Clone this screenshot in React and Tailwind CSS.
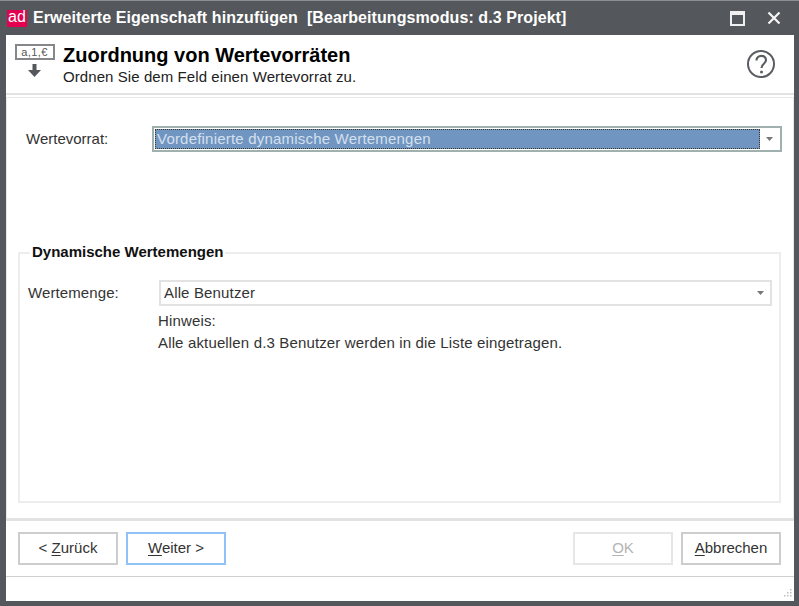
const Caret = () => (
  <svg width="7" height="4" viewBox="0 0 7 4">
    <path d="M0 0h7L3.5 4z" fill="#777" />
  </svg>
);

const Btn = ({ hot, rest, focus, disabled, before }) => (
  <button
    className={`w-[100px] h-[33px] border-2 bg-white text-[15px] ${
      focus ? "border-[#8fc2f7] text-[#333]" : disabled ? "border-[#e6e6e6] text-[#b4b4b4]" : "border-[#cdcdcd] text-[#333]"
    }`}
  >
    {before}
    <span className="underline underline-offset-2">{hot}</span>
    {rest}
  </button>
);

export default function App() {
  return (
    <div className="w-[799px] h-[606px] bg-[#54575b] border-t border-[#8d8f91] flex flex-col font-['Liberation_Sans',Arial,sans-serif] overflow-hidden">
      {/* title bar */}
      <div className="h-[34px] flex items-center pl-[7px] pr-[18px] text-white shrink-0">
        <div className="w-[20px] h-[17px] bg-[#e2004f] flex items-center justify-center text-[16px] leading-none pb-[2px] mr-[6px]">
          ad
        </div>
        <span className="text-[16px] font-bold tracking-[0.08px] whitespace-pre flex-1">
          Erweiterte Eigenschaft hinzufügen  [Bearbeitungsmodus: d.3 Projekt]
        </span>
        <div className="w-[15px] h-[15px] border-2 border-t-[4px] border-[#f0f0f0] mr-[22px]" />
        <svg width="14" height="14" viewBox="0 0 14 14">
          <path d="M1.500 1.500l11 11M12.500 1.500l-11 11" stroke="#f5f5f5" strokeWidth="2.2" />
        </svg>
      </div>

      <div className="flex-1 mr-[5px] mb-[5px] ml-[6px] bg-white flex flex-col min-h-0">
        {/* header */}
        <div className="h-[60px] flex shrink-0 pl-[8px] pr-[18px] border-b-2 border-[#e2e2e2]">
          <div className="w-[41px] pt-[9px] flex flex-col items-center mr-[8px]">
            <div className="w-[40px] h-[16px] border-2 border-[#85878a] text-[11px] leading-[12px] text-center text-[#555] tracking-[0.4px]">
              a,1,€
            </div>
            <svg width="13" height="13" viewBox="0 0 13 13" className="mt-[4px]">
              <path d="M4.500 0h4v6h4.500l-6.500 7L0 6h4.500z" fill="#54575b" />
            </svg>
          </div>
          <div className="flex-1 pt-[9px]">
            <div className="text-[20px] font-bold leading-[23px] text-black">Zuordnung von Wertevorräten</div>
            <div className="text-[15px] tracking-[0.08px] leading-[17px] mt-[1px] text-[#222]">
              Ordnen Sie dem Feld einen Wertevorrat zu.
            </div>
          </div>
          <svg width="30" height="30" viewBox="0 0 30 30" className="mt-[14px]">
            <circle cx="15" cy="15" r="13" fill="none" stroke="#5a5d61" strokeWidth="2" />
            <path d="M10.500 11.500c0-6 9.500-6 9.500-.5 0 4-4.500 3.500-4.500 8" fill="none" stroke="#5a5d61" strokeWidth="2.2" />
            <circle cx="15.500" cy="23" r="1.500" fill="#5a5d61" />
          </svg>
        </div>

        {/* wizard page */}
        <div className="flex-1 mt-[2px] border-x border-t border-[#e8e8e8] min-h-0 flex flex-col">
          <div className="flex items-center h-[26px] mt-[28px] pl-[19px] pr-[11px]">
            <span className="w-[126px] text-[15px] text-[#333]">Wertevorrat:</span>
            <div className="flex-1 h-[26px] border-2 border-[#9fb0ae] flex items-center p-[1px]">
              <div className="flex-1 h-[20px] bg-[#7095c1] border border-dotted border-[#3a3a2e] text-[15px] tracking-[0.2px] leading-[18px] pl-[1px] text-[#d5e0ee]">
                Vordefinierte dynamische Wertemengen
              </div>
              <div className="w-[19px] flex justify-center">
                <Caret />
              </div>
            </div>
          </div>

          {/* group */}
          <div className="relative h-[251px] mt-[100px] ml-[11px] mr-[12px] border-2 border-[#ededed] pt-[26px] pl-[8px] pr-[7px]">
            <span className="absolute left-[10px] top-[-10px] bg-white px-[2px] text-[15px] leading-[16px] font-bold text-[#111]">
              Dynamische Wertemengen
            </span>
            <div className="flex items-center">
              <span className="w-[131px] text-[15px] tracking-[0.1px] text-[#333]">Wertemenge:</span>
              <div className="flex-1 h-[26px] border-2 border-[#e2e2e2] flex items-center pl-[3px] text-[15px] tracking-[0.15px] text-[#333]">
                <span className="flex-1">Alle Benutzer</span>
                <div className="w-[19px] flex justify-center">
                  <Caret />
                </div>
              </div>
            </div>
            <div className="pl-[130px] text-[15px] tracking-[0.15px] text-[#333] mt-[7px] leading-[16px]">Hinweis:</div>
            <div className="pl-[130px] text-[15px] tracking-[0.15px] text-[#333] mt-[6px] leading-[16px]">
              Alle aktuellen d.3 Benutzer werden in die Liste eingetragen.
            </div>
          </div>

          <div className="flex-1" />
        </div>

        {/* footer */}
        <div className="h-[59px] shrink-0 border-t-[3px] border-b border-t-[#e2e2e2] border-b-[#d0d0d0] flex items-start pt-[11px] pl-[12px] pr-[13px] gap-[8px]">
          <Btn before="< " hot="Z" rest="urück" />
          <Btn hot="W" rest="eiter >" focus />
          <div className="flex-1" />
          <Btn hot="O" rest="K" disabled />
          <Btn hot="A" rest="bbrechen" />
        </div>

        {/* status bar */}
        <div className="h-[24px] shrink-0 flex items-end justify-end pr-[2px] pb-[2px]">
          <svg width="11" height="11" viewBox="0 0 11 11">
            <path d="M9 1h1.500v1.500H9zM6 4h1.500v1.500H6zM9 4h1.500v1.500H9zM3 7h1.500v1.500H3zM6 7h1.500v1.500H6zM9 7h1.500v1.500H9z" fill="#bdbdbd" />
          </svg>
        </div>
      </div>
    </div>
  );
}
